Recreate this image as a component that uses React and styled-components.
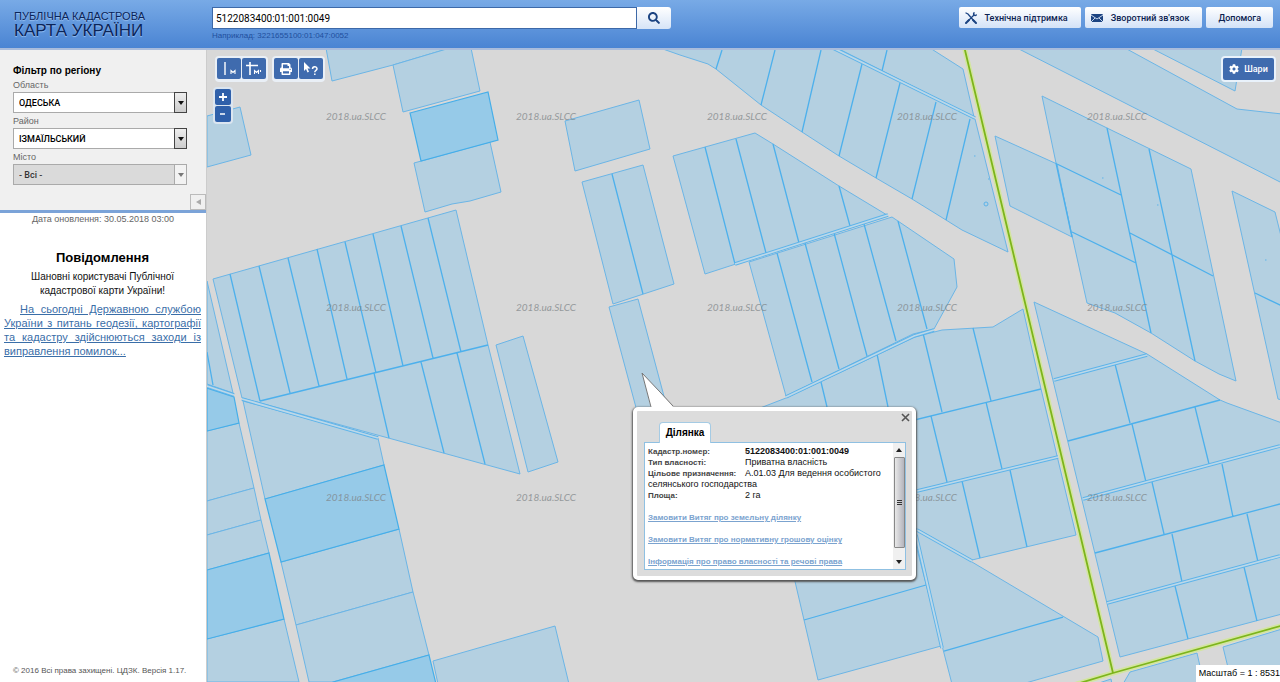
import styled, { createGlobalStyle } from "styled-components";
import { FaCog, FaPrint, FaSearch } from "react-icons/fa";

const parcels = [
  "207,281 233,393 207,384",
  "207,501 207,431 239,423 254,488",
  "207,501 254,488 261,520 207,535",
  "207,535 261,520 269,553 207,570",
  "207,639 284,619 299,682 207,682",
  "207,116 240,107 251,155 207,167",
  "326,48 332,81 393,65 450,48",
  "393,65 403,112 480,91 471,48 450,48",
  "414,163 490,142 501,192 470,201 452,204 425,212",
  "213,279 456,210 488,345 520,474 242,398",
  "496,345 523,336 558,462 528,472",
  "243,401 378,438 384,465 265,499",
  "281,562 399,529 413,592 296,625",
  "296,625 413,592 429,655 333,682 309,682",
  "433,661 555,626 569,684 438,684",
  "565,121 639,100 650,149 575,171",
  "582,182 643,165 674,284 613,304",
  "609,307 638,299 669,415 638,415",
  "660,48 680,55 708,64 716,69 761,105 802,132 839,156 876,178 912,199 946,220 962,230 1008,252 975,119 833,48",
  "837,48 974,117 963,69 930,48",
  "673,156 755,133 773,144 839,186 887,215 705,274",
  "749,262 892,217 954,259 957,287 934,329 913,334 786,396",
  "755,410 786,398 915,337 942,330 993,327 1023,309 1041,389 1076,535 972,560 880,508",
  "790,560 905,520 911,515 941,646 818,680 804,620",
  "911,526 972,562 1098,637 1103,661 1022,684 952,684",
  "1017,48 1125,48 1237,109 1282,114 1282,183",
  "1151,48 1235,91 1242,48",
  "1042,96 1107,128 1191,169 1236,381 1219,374 1195,361 1151,333 1115,313 1087,303 1056,163",
  "995,136 1057,164 1072,237 1010,206",
  "1232,191 1275,212 1282,240 1282,400 1278,399",
  "1034,302 1147,354 1220,400 1227,403 1282,423 1282,614 1120,657",
  "1123,684 1130,672 1197,653 1204,684",
  "1223,647 1282,629 1282,684 1232,684",
  "1096,684 1111,679 1112,684",
];

const darkParcels = [
  "207,388 234,397 239,423 207,431",
  "207,570 269,553 284,619 207,639",
  "265,499 384,465 399,529 281,562",
  "333,682 429,655 436,684 333,684",
  "410,113 488,92 498,140 421,161",
];

const dividers = [
  // left block
  "M207 352L213 385M230 274L260 401M259 266L290 393M288 258L319 386M317 249L347 379M345 242L376 373",
  "M373 234L403 366M401 226L433 358M428 218L461 352M260 401L488 345",
  "M374 373L389 438M421 362L444 453M457 353L485 464",
  "M612 174L643 294",
  // north block
  "M722 50L716 69M775 50L761 105M821 50L802 132M862 64L839 156M900 83L876 178M936 102L912 199M970 119L946 220M887 50L882 71",
  // centre blocks
  "M705 147L735 264M736 139L766 253M773 144L799 243M839 186L850 226",
  "M777 253L812 382M805 243L839 369M834 233L867 356M864 224L896 341M898 221L927 329",
  "M821 382L827 407M877 354L888 407M923 333L942 412M973 328L991 401M890 426L1041 389",
  "M931 416L947 482M986 402L1002 469M962 481L980 558M1010 470L1027 547",
  "M804 620L926 585M944 651L1063 617",
  // east blocks
  "M1057 164L1121 195M1072 232L1136 263M1130 233L1213 276M1107 128L1151 333M1149 149L1195 361M1255 293L1282 306",
  "M1056 163L1072 237",
  "M1068 441L1220 400M1095 553L1280 504M1115 364L1130 423M1132 424L1146 482M1195 407L1209 464",
  "M1152 482L1164 534M1222 464L1233 517M1172 534L1182 582M1247 514L1258 562M1175 586L1188 639M1244 567L1257 621",
];

const lanes = [
  "M833 48L975 118",
  "M735 264L888 215",
  "M786 397L914 336L934 330",
  "M917 491L1058 457",
  "M917 530L972 561",
  "M916 535L942 648",
  "M1054 380L1147 355",
  "M1083 499L1280 446",
  "M1107 603L1280 556",
  "M242 399L378 438",
  "M207 386L234 395",
];

const watermarks = [
  { y: 120, columns: [326, 516, 707, 897, 1087] },
  { y: 311, columns: [326, 516, 707, 897, 1087] },
  { y: 501, columns: [326, 516, 897, 1087] },
];

function CadastreMap() {
  return (
    <MapCanvas viewBox="207 50 1073 632" preserveAspectRatio="xMinYMin slice" aria-label="Кадастрова карта">
      <g fill="#b4d0e1" stroke="#6bb5e6" strokeWidth="1">
        {parcels.map((points) => (
          <polygon key={points} points={points} />
        ))}
      </g>
      <g fill="#96cae8" stroke="#45aee9" strokeWidth="1.2">
        {darkParcels.map((points) => (
          <polygon key={points} points={points} />
        ))}
      </g>
      <path d={dividers.join("")} fill="none" stroke="#4db0ec" strokeWidth="1.3" />
      <path d={lanes.join("")} fill="none" stroke="#5db3e9" strokeWidth="3.6" />
      <path d={lanes.join("")} fill="none" stroke="#bcd8e9" strokeWidth="1.8" />
      <g fill="none" stroke="#5db3e9">
        <circle cx="986" cy="204" r="2" />
        <path d="M974 156h1.500M988 179h1.500M1102 178h1.500M1157 205h1.500M1265 260h1.500" />
      </g>
      <g fill="none" strokeLinejoin="round">
        <path d="M964 46L1113 673M1070 686L1113 673L1284 625" stroke="#d3e5a0" strokeWidth="5" />
        <path d="M964 46L1113 673M1070 686L1113 673L1284 625" stroke="#7db51b" strokeWidth="1.8" />
      </g>
      <Watermarks>
        {watermarks.map(({ y, columns }) =>
          columns.map((x) => (
            <text key={`${x}-${y}`} x={x} y={y}>
              2018.ua.SLCC
            </text>
          ))
        )}
      </Watermarks>
    </MapCanvas>
  );
}

function RegionSelect({ id, label, value, disabled }) {
  return (
    <Field>
      <FieldLabel htmlFor={id}>{label}</FieldLabel>
      <SelectBox>
        <Select id={id} defaultValue={value} disabled={disabled}>
          <option>{value}</option>
        </Select>
        <SelectArrow $disabled={disabled}>
          <svg width="6" height="4" viewBox="0 0 6 4">
            <path d="M0 0h6L3 4z" fill="currentColor" />
          </svg>
        </SelectArrow>
      </SelectBox>
    </Field>
  );
}

function ParcelPopup() {
  return (
    <Popup>
      <PopupTail viewBox="0 0 34 36">
        <path d="M1 1L10 36H33L19 20Z" fill="#fff" />
        <path d="M10 35L1 1L19 20L32 34" fill="none" stroke="#777" strokeWidth="1" />
      </PopupTail>
      <CloseBtn aria-label="Закрити">
        <svg width="9" height="9" viewBox="0 0 9 9">
          <path d="M1 1l7 7M8 1L1 8" stroke="#555" strokeWidth="1.6" />
        </svg>
      </CloseBtn>
      <PopupTab>Ділянка</PopupTab>
      <PopupBody>
        <Details>
          <p>
            <Term>Кадастр.номер:</Term>
            <b>5122083400:01:001:0049</b>
          </p>
          <p>
            <Term>Тип власності:</Term>Приватна власність
          </p>
          <p>
            <Term>Цільове призначення:</Term>А.01.03 Для ведення особистого селянського господарства
          </p>
          <p>
            <Term>Площа:</Term>2 га
          </p>
          <OrderLink href="#order">Замовити Витяг про земельну ділянку</OrderLink>
          <OrderLink href="#value">Замовити Витяг про нормативну грошову оцінку</OrderLink>
          <OrderLink href="#rights">Інформація про право власності та речові права</OrderLink>
        </Details>
        <ScrollBar>
          <svg width="6" height="4" viewBox="0 0 6 4">
            <path d="M0 4h6L3 0z" fill="#222" />
          </svg>
          <ScrollThumb>
            <svg width="5" height="6" viewBox="0 0 5 6">
              <path d="M0 .5h5M0 2.5h5M0 4.5h5" stroke="#333" />
            </svg>
          </ScrollThumb>
          <svg width="6" height="4" viewBox="0 0 6 4">
            <path d="M0 0h6L3 4z" fill="#222" />
          </svg>
        </ScrollBar>
      </PopupBody>
    </Popup>
  );
}

function App() {
  return (
    <Page>
      <GlobalStyle />
      <Header>
        <Logo>
          <LogoTop>ПУБЛІЧНА КАДАСТРОВА</LogoTop>
          <LogoBottom>КАРТА УКРАЇНИ</LogoBottom>
        </Logo>
        <SearchForm onSubmit={(e) => e.preventDefault()}>
          <SearchRow>
            <SearchInput id="search" defaultValue="5122083400:01:001:0049" />
            <SearchBtn aria-label="Пошук">
              <FaSearch size="12" />
            </SearchBtn>
          </SearchRow>
          <Hint htmlFor="search">Наприклад: 3221655100:01:047:0052</Hint>
        </SearchForm>
        <HeaderNav>
          <HeaderBtn>
            <svg width="12" height="12" viewBox="0 0 12 12" fill="none" stroke="#1c4482" strokeLinecap="round">
              <path d="M1 1l2 1 6 7M3 9l6-6" strokeWidth="1.3" />
              <path d="M8 8l3 3M1 11l3-3" strokeWidth="2" />
              <path d="M9 .8a2 2 0 0 0 0 2.2 2 2 0 0 0 2.3 0" strokeWidth="1.5" />
            </svg>
            Технічна підтримка
          </HeaderBtn>
          <HeaderBtn>
            <svg width="12" height="8" viewBox="0 0 12 8">
              <rect width="12" height="8" rx="1" fill="#1c4482" />
              <path d="M0 1l6 4 6-4M0 8l4-4M12 8L8 4" fill="none" stroke="#dbe7f7" strokeWidth=".9" />
            </svg>
            Зворотний зв'язок
          </HeaderBtn>
          <HeaderBtn>Допомога</HeaderBtn>
        </HeaderNav>
      </Header>
      <Main>
        <Sidebar>
          <Filter>
            <FilterTitle>Фільтр по регіону</FilterTitle>
            <RegionSelect id="oblast" label="Область" value="ОДЕСЬКА" />
            <RegionSelect id="rayon" label="Район" value="ІЗМАЇЛЬСЬКИЙ" />
            <RegionSelect id="misto" label="Місто" value="- Всі -" disabled />
            <CollapseBtn aria-label="Згорнути">
              <svg width="5" height="6" viewBox="0 0 5 6">
                <path d="M5 0v6L0 3z" fill="#aaa" />
              </svg>
            </CollapseBtn>
          </Filter>
          <Updated>Дата оновлення: 30.05.2018 03:00</Updated>
          <News>
            <NewsTitle>Повідомлення</NewsTitle>
            <NewsLead>Шановні користувачі Публічної кадастрової карти України!</NewsLead>
            <NewsLink href="#news">
              На сьогодні Державною службою України з питань геодезії, картографії та кадастру здійснюються заходи із
              виправлення помилок...
            </NewsLink>
          </News>
          <Copyright>© 2016 Всі права захищені. ЦДЗК. Версія 1.17.</Copyright>
        </Sidebar>
        <MapArea>
          <CadastreMap />
          <ToolBar>
            <ToolGroup>
              <ToolBtn aria-label="Виміряти відстань">
                <svg width="16" height="14" viewBox="0 0 16 14" fill="none" stroke="#fff">
                  <path d="M4 0v13" strokeWidth="1.4" />
                  <path d="M10 12V8.500l2 2 2-2V12" strokeWidth="1.100" />
                </svg>
              </ToolBtn>
              <ToolBtn aria-label="Виміряти площу">
                <svg width="18" height="14" viewBox="0 0 18 14" fill="none" stroke="#fff">
                  <path d="M5 0v13M1 3.500h12" strokeWidth="1.600" />
                  <path d="M9.500 12V8.500l2 2 2-2V12M15.500 8v2" strokeWidth="1.100" />
                </svg>
              </ToolBtn>
            </ToolGroup>
            <ToolGroup>
              <ToolBtn aria-label="Друк">
                <FaPrint size="12" />
              </ToolBtn>
              <ToolBtn aria-label="Інформація">
                <svg width="16" height="14" viewBox="0 0 16 14">
                  <path d="M1 0v9l2-2 1.500 3.500 1.500-.7L4.500 6.500h3z" fill="#fff" />
                  <path d="M9.500 7c0-3 4.500-3 4.500-.2 0 1.700-2.200 1.500-2.200 3.400M11.800 11.500v1.500" fill="none" stroke="#fff" strokeWidth="1.500" />
                </svg>
              </ToolBtn>
            </ToolGroup>
            <LayersBtn>
              <FaCog size="10" />
              Шари
            </LayersBtn>
          </ToolBar>
          <ZoomGroup>
            <ZoomBtn aria-label="Збільшити">
              <svg width="8" height="8" viewBox="0 0 8 8">
                <path d="M4 0v8M0 4h8" stroke="#fff" strokeWidth="1.800" />
              </svg>
            </ZoomBtn>
            <ZoomBtn aria-label="Зменшити">
              <svg width="8" height="8" viewBox="0 0 8 8">
                <path d="M1 4h5" stroke="#fff" strokeWidth="1.500" />
              </svg>
            </ZoomBtn>
          </ZoomGroup>
          <ParcelPopup />
          <Scale>Масштаб = 1 : 8531</Scale>
        </MapArea>
      </Main>
    </Page>
  );
}

const GlobalStyle = createGlobalStyle`
  * {
    box-sizing: border-box;
  }

  body {
    margin: 0;
    font-family: "Liberation Sans", Arial, sans-serif;
    font-size: 10px;
    color: #111;
  }

  h2, h3, p {
    margin: 0;
  }

  button, input, select {
    margin: 0;
    padding: 0;
    border: none;
    font: inherit;
  }

  svg {
    display: block;
    flex-shrink: 0;
  }
`;

const Page = styled.div`
  display: flex;
  flex-direction: column;
  height: 100vh;
  overflow: hidden;
`;

const Header = styled.header`
  display: flex;
  align-items: flex-start;
  height: 50px;
  flex-shrink: 0;
  padding-right: 7px;
  background: linear-gradient(#78aae6, #4a84d3);
  border-bottom: 2px solid #a9bcdc;
`;

const Logo = styled.div`
  width: 212px;
  flex-shrink: 0;
  padding: 10px 0 0 14px;
  color: #0a2458;
  text-shadow: 0 1px 1px #9cc4f4;
  white-space: nowrap;
`;

const LogoTop = styled.div`
  font-size: 11px;
  line-height: 12px;
`;

const LogoBottom = styled.div`
  font-size: 17px;
  line-height: 18px;
`;

const SearchForm = styled.form`
  flex: 0 1 459px;
  padding-top: 7px;
`;

const SearchRow = styled.div`
  display: flex;
  height: 22px;
`;

const SearchInput = styled.input`
  flex: 1;
  min-width: 0;
  padding: 0 3px;
  background: #fff;
  border: 1px solid #3d69a8;
  font-family: Roboto, sans-serif;
  color: #000;
`;

const SearchBtn = styled.button`
  display: flex;
  justify-content: center;
  align-items: center;
  width: 34px;
  background: linear-gradient(#fff, #d6e4f7);
  border-radius: 0 3px 3px 0;
  color: #1c4482;
`;

const Hint = styled.label`
  display: block;
  font-size: 8px;
  line-height: 14px;
  color: #1f4f9e;
`;

const HeaderNav = styled.nav`
  display: flex;
  gap: 4px;
  margin-left: auto;
  padding-top: 7px;
`;

const HeaderBtn = styled.button`
  display: flex;
  align-items: center;
  gap: 8px;
  height: 21px;
  padding: 0 13px 0 6px;
  background: linear-gradient(#fff, #d3e2f7);
  border-radius: 2px;
  font-family: Roboto, sans-serif;
  font-size: 9px;
  font-weight: 500;
  color: #0c2250;
  white-space: nowrap;

  &:last-child {
    padding: 0 12px;
  }
`;

const Main = styled.main`
  display: flex;
  flex: 1;
  min-height: 0;
`;

const Sidebar = styled.aside`
  display: flex;
  flex-direction: column;
  width: 207px;
  flex-shrink: 0;
  background: #fff;
  border-right: 1px solid #ccc;
`;

const Filter = styled.section`
  display: flex;
  flex-direction: column;
  padding: 13px 0 0 13px;
  background: #f0f0f0;
  border-bottom: 3px solid #7ba3d8;
`;

const FilterTitle = styled.h2`
  padding-bottom: 1px;
  font-size: 10px;
  line-height: 15px;
  color: #000;
`;

const Field = styled.div`
  display: flex;
  flex-direction: column;
  width: 174px;
  padding-bottom: 2px;
`;

const FieldLabel = styled.label`
  font-size: 9px;
  line-height: 13px;
  color: #666;
`;

const SelectBox = styled.div`
  display: grid;
  grid-template-columns: 1fr 13px;
  height: 21px;
`;

const Select = styled.select`
  grid-area: 1 / 1 / 2 / 3;
  appearance: none;
  padding: 0 18px 0 5px;
  background: #fff;
  border: 1px solid #aaa;
  border-radius: 0;
  color: #000;
  font-family: Roboto, sans-serif;
  font-size: 9px;
  font-weight: 500;

  &:disabled {
    background: #dadada;
    color: #333;
    opacity: 1;
  }
`;

const SelectArrow = styled.span`
  grid-area: 1 / 2 / 2 / 3;
  display: flex;
  justify-content: center;
  align-items: center;
  background: ${({ $disabled }) => ($disabled ? "#f2f2f2" : "linear-gradient(#eee, #ccc)")};
  border: 1px solid ${({ $disabled }) => ($disabled ? "#aaa" : "#444")};
  color: ${({ $disabled }) => ($disabled ? "#777" : "#111")};
  pointer-events: none;
`;

const CollapseBtn = styled.button`
  display: flex;
  justify-content: center;
  align-items: center;
  align-self: flex-end;
  width: 16px;
  height: 16px;
  margin-top: 7px;
  background: #f0f0f0;
  border: 1px solid #bbb;
`;

const Updated = styled.p`
  font-size: 9px;
  line-height: 13px;
  color: #666;
  text-align: center;
`;

const News = styled.section`
  padding: 24px 5px 0 4px;
`;

const NewsTitle = styled.h2`
  padding-bottom: 4px;
  font-size: 13px;
  line-height: 16px;
  color: #000;
  text-align: center;
`;

const NewsLead = styled.p`
  padding: 0 16px;
  line-height: 14px;
  color: #111;
  text-align: center;
`;

const NewsLink = styled.a`
  display: block;
  padding-top: 4px;
  font-size: 11px;
  line-height: 14px;
  color: #3a6ea8;
  text-align: justify;
  text-indent: 16px;
`;

const Copyright = styled.footer`
  margin-top: auto;
  padding: 0 0 5px 13px;
  font-size: 8px;
  line-height: 12px;
  color: #555;
  white-space: nowrap;
`;

const MapArea = styled.section`
  position: relative;
  flex: 1;
  min-width: 0;
  overflow: hidden;
  background: #d8d8d8;
`;

const MapCanvas = styled.svg`
  width: 100%;
  height: 100%;
`;

const Watermarks = styled.g`
  font-family: Lato, sans-serif;
  font-size: 10px;
  font-style: italic;
  fill: #7f8588;
  opacity: 0.75;
`;

const ToolBar = styled.div`
  position: absolute;
  top: 6px;
  left: 8px;
  right: 4px;
  display: flex;
  gap: 4px;
`;

const ToolGroup = styled.div`
  display: flex;
  gap: 1px;
  padding: 2px;
  background: #e9eff6;
  border-radius: 4px;
`;

const ToolBtn = styled.button`
  display: flex;
  justify-content: center;
  align-items: center;
  width: 24px;
  height: 21px;
  background: #3f6bae;
  border-radius: 2px;
  color: #fff;
`;

const LayersBtn = styled.button`
  display: flex;
  justify-content: center;
  align-items: center;
  gap: 5px;
  width: 55px;
  height: 26px;
  margin-left: auto;
  background: #3f6bae;
  border: 2px solid #e9f2fb;
  border-radius: 4px;
  font-family: Roboto, sans-serif;
  font-size: 9px;
  font-weight: 500;
  color: #fff;
`;

const ZoomGroup = styled.div`
  position: absolute;
  top: 37px;
  left: 6px;
  display: flex;
  flex-direction: column;
  gap: 1px;
  padding: 2px;
  background: #dbe5f0;
  border-radius: 4px;
`;

const ZoomBtn = styled.button`
  display: flex;
  justify-content: center;
  align-items: center;
  width: 16px;
  height: 16px;
  background: #2f60aa;
  border-radius: 2px;
`;

const Popup = styled.div`
  position: absolute;
  top: 357px;
  left: 426px;
  width: 283px;
  padding: 11px 6px 6px 7px;
  background: #dcdcdc;
  border: 4px solid #fff;
  border-radius: 5px;
  box-shadow: 0 1px 2px 1px #555;
`;

const PopupTail = styled.svg`
  position: absolute;
  top: -39px;
  left: 4px;
  width: 34px;
  height: 36px;
`;

const CloseBtn = styled.button`
  position: absolute;
  top: 1px;
  right: 1px;
  padding: 1px;
  background: none;
`;

const PopupTab = styled.h3`
  position: relative;
  width: 52px;
  margin-left: 15px;
  padding-bottom: 1px;
  background: #fff;
  border: 1px solid #a5cbe4;
  border-bottom: none;
  border-radius: 4px 4px 0 0;
  font-size: 10px;
  line-height: 19px;
  color: #000;
  text-align: center;
`;

const PopupBody = styled.div`
  display: flex;
  height: 128px;
  margin-top: -1px;
  background: #fff;
  border: 1px solid #8fc0e2;
`;

const Details = styled.div`
  flex: 1;
  padding: 3px 0 0 3px;
  overflow: hidden;
  font-size: 9px;
  line-height: 11px;
  color: #111;
`;

const Term = styled.span`
  display: inline-block;
  width: 97px;
  font-size: 8px;
  font-weight: bold;
  color: #444;
  white-space: nowrap;
`;

const OrderLink = styled.a`
  display: block;
  padding-top: 11px;
  font-size: 8px;
  font-weight: bold;
  color: #7ba3cf;
  white-space: nowrap;
`;

const ScrollBar = styled.div`
  display: flex;
  flex-direction: column;
  align-items: center;
  gap: 5px;
  width: 12px;
  padding: 5px 0;
  background: #f0f0f0;
`;

const ScrollThumb = styled.div`
  display: flex;
  justify-content: center;
  align-items: center;
  width: 11px;
  height: 91px;
  margin-bottom: auto;
  background: linear-gradient(90deg, #e8e8e8, #b4b4bc);
  border: 1px solid #888;
  border-radius: 1px;
`;

const Scale = styled.div`
  position: absolute;
  right: 0;
  bottom: 0;
  padding: 2px 0 2px 3px;
  background: #fff;
  font-size: 9px;
  line-height: 13px;
  color: #000;
`;

export default App;
